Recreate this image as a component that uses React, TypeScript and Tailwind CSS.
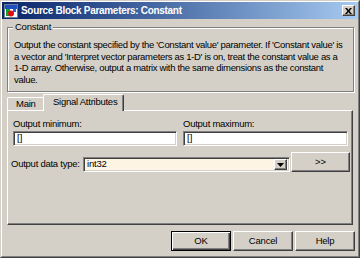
import React from "react";

const raised =
  "border border-t-white border-l-white border-r-[#404040] border-b-[#404040] shadow-[inset_-1px_-1px_0_#808080]";
const sunken =
  "border border-t-[#808080] border-l-[#808080] border-r-white border-b-white shadow-[inset_1px_1px_0_#404040,inset_-1px_-1px_0_#d4d0c8]";

function SimIcon() {
  return (
    <svg width="14" height="14" viewBox="0 0 14 14" className="shrink-0">
      <rect x="0.5" y="0.5" width="13" height="13" fill="#ffffff" stroke="#6b7c93" />
      <rect x="1" y="1" width="12" height="4" fill="#1f4fbf" />
      <rect x="2" y="5" width="4" height="7" fill="#10a030" />
      <circle cx="7" cy="9.5" r="3" fill="#e01010" />
      <rect x="9" y="5" width="3" height="3" fill="#3060d0" />
    </svg>
  );
}

function Btn({ children, def = false }: { children: React.ReactNode; def?: boolean }) {
  return (
    <div
      className={
        "w-[60px] h-[20px] flex items-center justify-center bg-[#d4d0c8] text-[9.5px] tracking-[-0.2px] " +
        (def
          ? "border border-black shadow-[inset_1px_1px_0_#fff,inset_-1px_-1px_0_#404040,inset_-2px_-2px_0_#808080]"
          : raised)
      }
    >
      {children}
    </div>
  );
}

export default function App() {
  return (
    <div className="w-[360px] h-[258px] bg-[#d4d0c8] border border-t-[#d4d0c8] border-l-[#d4d0c8] border-r-[#404040] border-b-[#404040] font-['Liberation_Sans',Arial,sans-serif] text-black overflow-hidden">
      <div className="h-full flex flex-col border border-t-white border-l-white border-r-[#808080] border-b-[#808080]">
        {/* Title bar */}
        <div className="h-[17px] shrink-0 flex items-center bg-linear-to-r from-[#0a246a] to-[#a6caf0] pl-[2px] pr-[3px]">
          <SimIcon />
          <span className="ml-[3px] text-white font-bold text-[10px] tracking-[-0.3px] whitespace-nowrap">
            Source Block Parameters: Constant
          </span>
          <div className={"ml-auto w-[13px] h-[11px] bg-[#d4d0c8] flex items-center justify-center " + raised}>
            <svg width="7" height="6" viewBox="0 0 7 6">
              <path d="M0 0h2l1.5 2L5 0h2L4.5 3L7 6H5L3.5 4L2 6H0l2.5-3z" fill="#000" />
            </svg>
          </div>
        </div>

        {/* Body */}
        <div className="flex-1 flex flex-col pl-[5px] pr-[4px] pt-[8px]">
          {/* Group box */}
          <div className="relative h-[65px] border border-[#808080] shadow-[inset_1px_1px_0_#fff,1px_1px_0_#fff] pt-[11px] pl-[6px]">
            <span className="absolute left-[5px] top-[-7px] px-[2px] bg-[#d4d0c8] text-[9.5px] leading-[12px] tracking-[-0.25px]">
              Constant
            </span>
            <p className="text-[9.5px] leading-[11.5px] tracking-[-0.32px] whitespace-nowrap">
              Output the constant specified by the 'Constant value' parameter. If 'Constant value' is
              <br />
              a vector and 'Interpret vector parameters as 1-D' is on, treat the constant value as a
              <br />
              1-D array. Otherwise, output a matrix with the same dimensions as the constant
              <br />
              value.
            </p>
          </div>

          {/* Tabs */}
          <div className="h-[18px] flex items-end">
            <div className="w-[38px] h-[13px] flex items-center pl-[8px] border-t border-l border-t-white border-l-white border-r border-r-[#404040] rounded-t-[2px] text-[9.5px] tracking-[-0.25px]">
              Main
            </div>
            <div className="relative z-10 -ml-[2px] -mb-px w-[81px] h-[17px] bg-[#d4d0c8] flex items-center pl-[9px] pb-[1px] border-t border-l border-r border-t-white border-l-white border-r-[#404040] shadow-[inset_-1px_0_0_#808080] rounded-t-[2px] text-[9.5px] tracking-[-0.25px] whitespace-nowrap">
              Signal Attributes
            </div>
          </div>

          {/* Tab page */}
          <div className="mr-px h-[115px] border border-t-white border-l-white border-r-[#404040] border-b-[#404040] shadow-[inset_-1px_-1px_0_#808080] pt-[7px] pl-[5px]">
            <div className="flex gap-[6px]">
              <div className="w-[164px] flex flex-col">
                <span className="text-[9.5px] leading-[12px] tracking-[-0.25px]">Output minimum:</span>
                <div className={"mt-px h-[15px] bg-white flex items-center pl-[3px] text-[9.5px] " + sunken}>[]</div>
              </div>
              <div className="w-[165px] flex flex-col">
                <span className="text-[9.5px] leading-[12px] tracking-[-0.25px]">Output maximum:</span>
                <div className={"mt-px h-[15px] bg-white flex items-center pl-[3px] text-[9.5px] " + sunken}>[]</div>
              </div>
            </div>

            <div className="mt-[6px] flex items-end -ml-[2px]">
              <span className="w-[72px] mb-[2px] text-[9.5px] leading-[12px] tracking-[-0.25px] whitespace-nowrap">
                Output data type:
              </span>
              <div className={"w-[207px] h-[15px] bg-[#fef4e4] flex items-center pl-[3px] pr-[2px] " + sunken}>
                <span className="text-[9.5px] tracking-[-0.2px]">int32</span>
                <div className={"ml-auto w-[13px] h-[11px] bg-[#d4d0c8] flex items-center justify-center " + raised}>
                  <svg width="7" height="4" viewBox="0 0 7 4">
                    <path d="M0 0h7L3.5 4z" fill="#000" />
                  </svg>
                </div>
              </div>
              <div className={"ml-px w-[59px] h-[20px] bg-[#d4d0c8] flex items-center justify-center text-[9.5px] " + raised}>
                &gt;&gt;
              </div>
            </div>
          </div>

          {/* Buttons */}
          <div className="mt-[6px] -mr-px flex justify-end gap-[2px]">
            <Btn def>OK</Btn>
            <Btn>Cancel</Btn>
            <Btn>Help</Btn>
          </div>
        </div>
      </div>
    </div>
  );
}
